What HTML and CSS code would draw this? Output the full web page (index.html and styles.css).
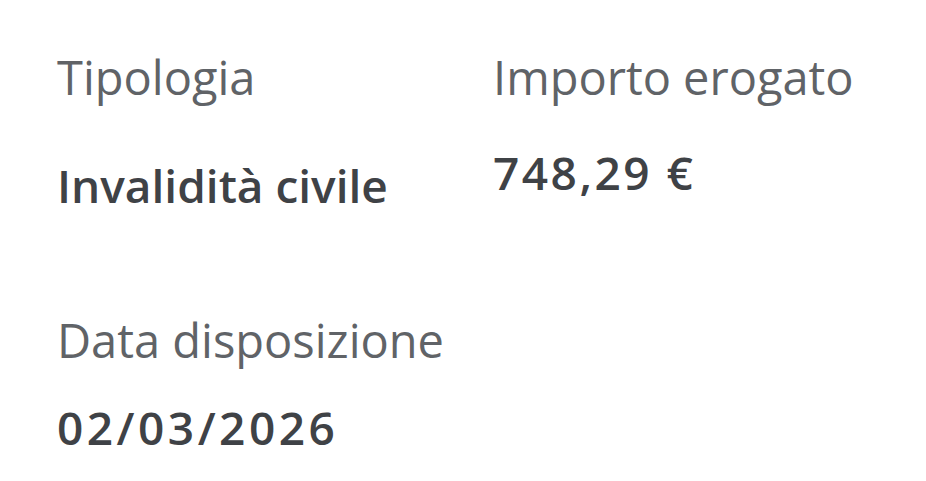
FILE: index.html
```html
<!DOCTYPE html>
<html lang="it">
<head>
<meta charset="utf-8">
<link rel="stylesheet" href="styles.css">
</head>
<body>
<div class="details">
  <div class="field">
    <div class="label">Tipologia</div>
    <div class="value">Invalidità civile</div>
  </div>
  <div class="field">
    <div class="label">Importo erogato</div>
    <div class="value value-amount">748,29 €</div>
  </div>
  <div class="field">
    <div class="label">Data disposizione</div>
    <div class="value value-date">02/03/2026</div>
  </div>
</div>
</body>
</html>
```
FILE: styles.css
```css
html, body {
  margin: 0;
  background: #ffffff;
}
body {
  font-family: "Open Sans", "Noto Sans", sans-serif;
}
.details {
  display: grid;
  grid-template-columns: 436px auto;
  row-gap: 85px;
  padding: 42px 0 0 57px;
}
.label {
  font-size: 47px;
  line-height: 70px;
  color: #606367;
  font-weight: 400;
}
.value {
  font-size: 46px;
  line-height: 70px;
  color: #3f4246;
  font-weight: 600;
  margin-top: 38px;
}
.value-amount {
  margin-top: 25px;
  letter-spacing: 2.5px;
}
.value-date {
  margin-top: 17px;
  letter-spacing: 3.5px;
}
```
